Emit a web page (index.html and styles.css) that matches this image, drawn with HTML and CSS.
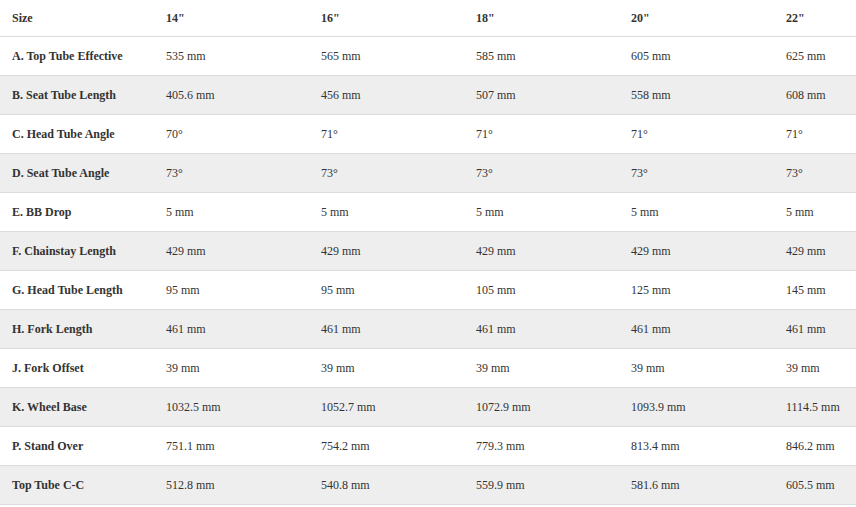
FILE: index.html
```html
<!DOCTYPE html>
<html>
<head>
<meta charset="utf-8">
<link rel="stylesheet" href="styles.css">
</head>
<body>
<table class="geo">
  <colgroup>
    <col class="c-label"><col class="c-size"><col class="c-size"><col class="c-size"><col class="c-size"><col>
  </colgroup>
  <thead>
    <tr class="head"><th>Size</th><th>14"</th><th>16"</th><th>18"</th><th>20"</th><th>22"</th></tr>
  </thead>
  <tbody>
    <tr><th>A. Top Tube Effective</th><td>535 mm</td><td>565 mm</td><td>585 mm</td><td>605 mm</td><td>625 mm</td></tr>
    <tr class="alt"><th>B. Seat Tube Length</th><td>405.6 mm</td><td>456 mm</td><td>507 mm</td><td>558 mm</td><td>608 mm</td></tr>
    <tr><th>C. Head Tube Angle</th><td>70°</td><td>71°</td><td>71°</td><td>71°</td><td>71°</td></tr>
    <tr class="alt"><th>D. Seat Tube Angle</th><td>73°</td><td>73°</td><td>73°</td><td>73°</td><td>73°</td></tr>
    <tr><th>E. BB Drop</th><td>5 mm</td><td>5 mm</td><td>5 mm</td><td>5 mm</td><td>5 mm</td></tr>
    <tr class="alt"><th>F. Chainstay Length</th><td>429 mm</td><td>429 mm</td><td>429 mm</td><td>429 mm</td><td>429 mm</td></tr>
    <tr><th>G. Head Tube Length</th><td>95 mm</td><td>95 mm</td><td>105 mm</td><td>125 mm</td><td>145 mm</td></tr>
    <tr class="alt"><th>H. Fork Length</th><td>461 mm</td><td>461 mm</td><td>461 mm</td><td>461 mm</td><td>461 mm</td></tr>
    <tr><th>J. Fork Offset</th><td>39 mm</td><td>39 mm</td><td>39 mm</td><td>39 mm</td><td>39 mm</td></tr>
    <tr class="alt"><th>K. Wheel Base</th><td>1032.5 mm</td><td>1052.7 mm</td><td>1072.9 mm</td><td>1093.9 mm</td><td>1114.5 mm</td></tr>
    <tr><th>P. Stand Over</th><td>751.1 mm</td><td>754.2 mm</td><td>779.3 mm</td><td>813.4 mm</td><td>846.2 mm</td></tr>
    <tr class="alt"><th>Top Tube C-C</th><td>512.8 mm</td><td>540.8 mm</td><td>559.9 mm</td><td>581.6 mm</td><td>605.5 mm</td></tr>
  </tbody>
</table>
</body>
</html>
```
FILE: styles.css
```css
html, body {
  margin: 0;
  padding: 0;
  background: #fff;
}
body {
  font-family: "Liberation Serif", "DejaVu Serif", serif;
  font-size: 12px;
  color: #333;
}
.geo {
  width: 100%;
  border-collapse: collapse;
  table-layout: fixed;
  font-family: "Liberation Serif", "DejaVu Serif", serif;
}
.c-label { width: 154px; }
.c-size { width: 155px; }
.geo th,
.geo td {
  text-align: left;
  vertical-align: middle;
  padding: 0 12px;
  height: 38px;
  border-bottom: 1px solid #dcdcdc;
  white-space: nowrap;
}
.geo th { font-weight: bold; }
.geo td { font-weight: normal; }
.geo .head th { height: 36px; }
.geo .alt { background: #eeeeee; }
```
